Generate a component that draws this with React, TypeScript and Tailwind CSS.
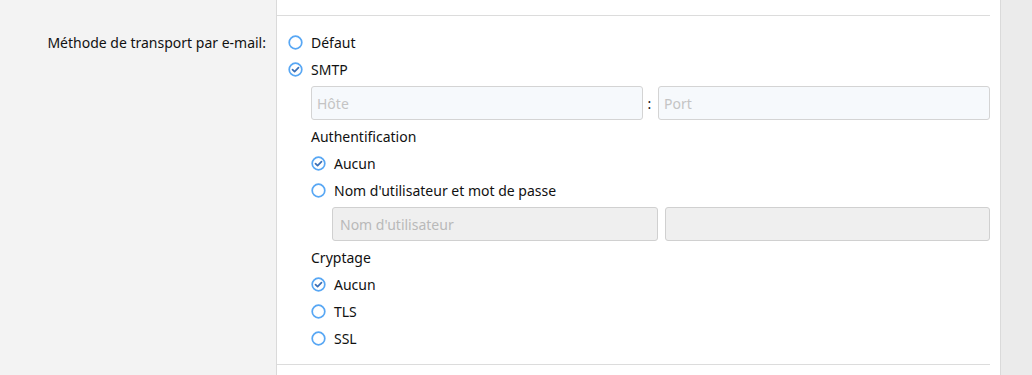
import React from 'react'

function Radio({ checked }: { checked?: boolean }) {
  return (
    <svg width="15" height="15" viewBox="0 0 15 15" className="shrink-0">
      <circle cx="7.5" cy="7.5" r="6.3" fill="none" stroke="#58a7f4" strokeWidth="1.7" />
      {checked && (
        <path
          d="M4.5 7.6l2.1 2.1 3.9-4"
          fill="none"
          stroke="#3a6fb6"
          strokeWidth="1.7"
          strokeLinecap="round"
          strokeLinejoin="round"
        />
      )}
    </svg>
  )
}

function Option({ label, checked }: { label: string; checked?: boolean }) {
  return (
    <div className="flex h-[27px] items-center gap-[8px]">
      <Radio checked={checked} />
      <span>{label}</span>
    </div>
  )
}

function Field({ placeholder, disabled }: { placeholder?: string; disabled?: boolean }) {
  return (
    <div
      className={
        disabled
          ? 'flex h-[34px] flex-1 items-center rounded-[3px] border border-[#d0d0d0] bg-[#efefef] px-[7px] text-[#b9b9b9]'
          : 'flex h-[34px] flex-1 items-center rounded-[3px] border border-[#d4d4d4] bg-[#f6f9fc] px-[5px] text-[#c4c4c4]'
      }
    >
      {placeholder}
    </div>
  )
}

export default function App() {
  return (
    <div className="flex h-[375px] w-[1032px] bg-[#f3f3f3] font-['Noto_Sans',sans-serif] text-[14px] text-[#111111]">
      <div className="w-[276px] shrink-0 pr-[10px] pt-[29px] text-right">
        <div className="flex h-[27px] items-center justify-end">Méthode de transport par e-mail:</div>
      </div>
      <div className="w-[725px] shrink-0 border-x border-[#dadada] bg-white">
        <div className="mr-[10px] h-[16px] border-b border-[#dcdcdc]" />
        <div className="pl-[11px] pr-[10px] pt-[13px]">
          <Option label="Défaut" />
          <Option label="SMTP" checked />
          <div className="pl-[23px]">
            <div className="mt-[3px] flex items-center">
              <Field placeholder="Hôte" />
              <span className="w-[15px] pr-[2px] text-center">:</span>
              <Field placeholder="Port" />
            </div>
            <div className="mt-[3px] flex h-[27px] items-center">Authentification</div>
            <div>
              <Option label="Aucun" checked />
              <Option label="Nom d'utilisateur et mot de passe" />
              <div className="mt-[3px] flex gap-[7px] pl-[21px]">
                <Field placeholder="Nom d'utilisateur" disabled />
                <Field disabled />
              </div>
            </div>
            <div className="mt-[3px] flex h-[27px] items-center">Cryptage</div>
            <Option label="Aucun" checked />
            <Option label="TLS" />
            <Option label="SSL" />
          </div>
        </div>
        <div className="mr-[10px] mt-[12px] border-b border-[#dcdcdc]" />
      </div>
      <div className="flex-1 bg-[#ebebeb]" />
    </div>
  )
}
